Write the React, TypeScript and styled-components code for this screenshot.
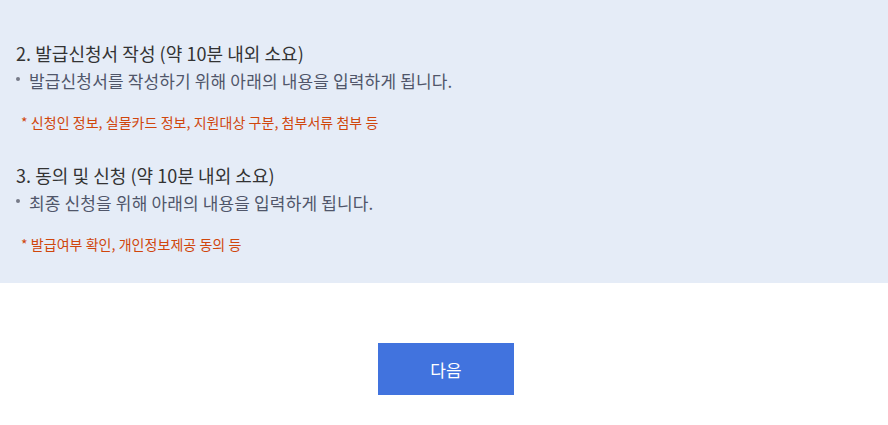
import styled, { createGlobalStyle } from "styled-components";

const GlobalStyle = createGlobalStyle`
  body {
    margin: 0;
    background: #ffffff;
    font-family: "Noto Sans CJK KR", "Noto Sans", sans-serif;
  }
`;

const Guide = styled.div`
  background-color: #e5ecf7;
  padding: 41px 16px 29px;
`;

const Step = styled.section`
  & + & {
    margin-top: 31px;
  }
`;

const StepTitle = styled.h3`
  margin: 0;
  font-size: 18px;
  font-weight: 400;
  line-height: 24px;
  color: #333333;
  letter-spacing: 0.05px;
`;

const StepDesc = styled.p`
  margin: 4px 0 0;
  font-size: 17px;
  line-height: 24px;
  color: #50566a;
  letter-spacing: 0.15px;
  display: flex;
  align-items: center;
  gap: 9px;

  &::before {
    content: "";
    width: 4px;
    height: 4px;
    border-radius: 50%;
    background: #777b88;
    flex: none;
    margin-top: -4px;
  }
`;

const Note = styled.p`
  margin: 19px 0 0 5px;
  font-size: 14px;
  line-height: 20px;
  color: #d0460c;
  letter-spacing: 0.05px;
`;

const Footer = styled.div`
  display: flex;
  justify-content: center;
  padding: 60px 0 30px 4px;
`;

const NextButton = styled.button`
  width: 136px;
  height: 52px;
  border: none;
  background-color: #4173de;
  color: #ffffff;
  font-family: inherit;
  font-size: 17px;
  cursor: pointer;
`;

const steps = [
  {
    title: "2. 발급신청서 작성 (약 10분 내외 소요)",
    desc: "발급신청서를 작성하기 위해 아래의 내용을 입력하게 됩니다.",
    note: "* 신청인 정보, 실물카드 정보, 지원대상 구분, 첨부서류 첨부 등",
  },
  {
    title: "3. 동의 및 신청 (약 10분 내외 소요)",
    desc: "최종 신청을 위해 아래의 내용을 입력하게 됩니다.",
    note: "* 발급여부 확인, 개인정보제공 동의 등",
  },
];

const App = () => {
  return (
    <>
      <GlobalStyle />
      <Guide>
        {steps.map((s) => (
          <Step key={s.title}>
            <StepTitle>{s.title}</StepTitle>
            <StepDesc>{s.desc}</StepDesc>
            <Note>{s.note}</Note>
          </Step>
        ))}
      </Guide>
      <Footer>
        <NextButton>다음</NextButton>
      </Footer>
    </>
  );
};

export default App;
